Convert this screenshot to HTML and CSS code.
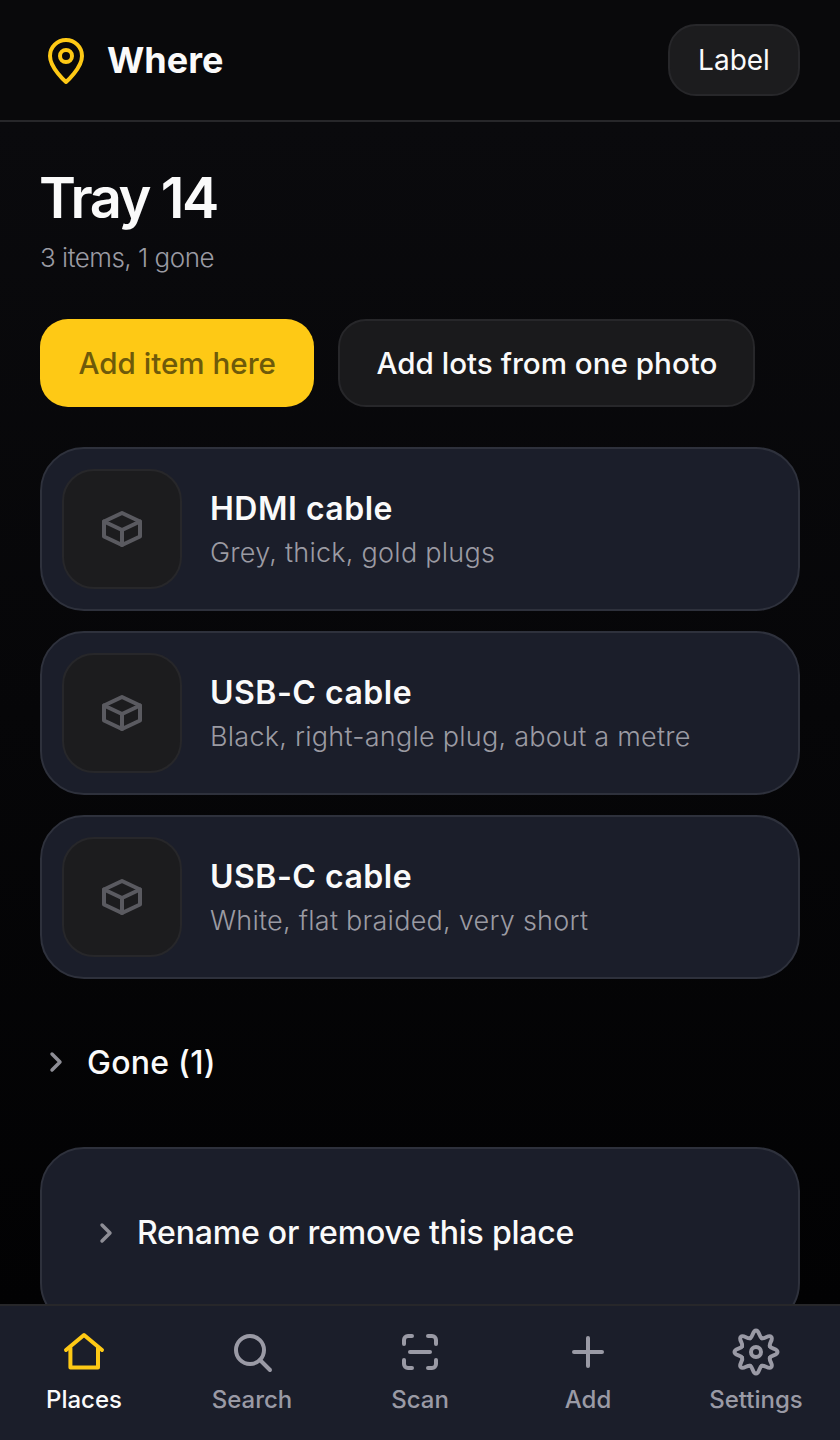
FILE: index.html
```html
<!DOCTYPE html>
<html lang="en">
<head>
    <meta charset="UTF-8">
    <meta name="viewport" content="width=device-width, initial-scale=1.0">
    <title>Where - Tray 14</title>
    <link rel="stylesheet" href="styles.css">
</head>
<body>
    <!-- shared shapes, drawn at each use -->
    <svg class="defs" aria-hidden="true">
        <defs>
            <g id="box" fill="none" stroke="currentColor" stroke-width="4" stroke-linecap="round" stroke-linejoin="round">
                <path d="M22 6 40 14.5V29.5L22 38 4 29.5V14.5Z"/>
                <path d="M4 14.5 22 23 40 14.5"/>
                <path d="M22 23V38"/>
            </g>
            <path id="tooth" d="M18.26 10.14C21 9 20.5 2.5 24 2.5S27 9 29.74 10.14"/>
        </defs>
    </svg>

    <div class="app">
        <header class="topbar">
            <div class="brand">
                <svg class="brand-icon" viewBox="0 0 24 24" fill="none" stroke="currentColor" stroke-width="2" stroke-linecap="round" stroke-linejoin="round">
                    <path d="M20 10c0 6-8 13-8 13s-8-7-8-13a8 8 0 0 1 16 0Z"/>
                    <circle cx="12" cy="10" r="3"/>
                </svg>
                <span class="brand-name">Where</span>
            </div>
            <button class="label-btn">Label</button>
        </header>

        <main class="content">
            <h1 class="title">Tray 14</h1>
            <p class="subtitle">3 items, 1 gone</p>

            <div class="actions">
                <button class="btn btn-primary">Add item here</button>
                <button class="btn btn-ghost">Add lots from one photo</button>
            </div>

            <ul class="items">
                <li class="item">
                    <div class="thumb"><svg viewBox="0 0 44 44"><use href="#box"/></svg></div>
                    <div class="item-text">
                        <div class="item-name">HDMI cable</div>
                        <div class="item-note">Grey, thick, gold plugs</div>
                    </div>
                </li>
                <li class="item">
                    <div class="thumb"><svg viewBox="0 0 44 44"><use href="#box"/></svg></div>
                    <div class="item-text">
                        <div class="item-name">USB-C cable</div>
                        <div class="item-note">Black, right-angle plug, about a metre</div>
                    </div>
                </li>
                <li class="item">
                    <div class="thumb"><svg viewBox="0 0 44 44"><use href="#box"/></svg></div>
                    <div class="item-text">
                        <div class="item-name">USB-C cable</div>
                        <div class="item-note">White, flat braided, very short</div>
                    </div>
                </li>
            </ul>

            <div class="disclosure gone">
                <svg class="chevron" viewBox="0 0 24 24" fill="none" stroke="currentColor" stroke-width="2.6" stroke-linecap="round" stroke-linejoin="round"><path d="m9 18 6-6-6-6"/></svg>
                <span>Gone (1)</span>
            </div>

            <section class="manage">
                <div class="disclosure">
                    <svg class="chevron" viewBox="0 0 24 24" fill="none" stroke="currentColor" stroke-width="2.6" stroke-linecap="round" stroke-linejoin="round"><path d="m9 18 6-6-6-6"/></svg>
                    <span>Rename or remove this place</span>
                </div>
            </section>
        </main>

        <nav class="tabbar">
            <a class="tab active">
                <svg viewBox="0 0 24 24" fill="none" stroke="currentColor" stroke-width="2" stroke-linecap="round" stroke-linejoin="round">
                    <path d="M3 11 12 3.5 21 11"/><path d="M5.2 10v9.7H19V10"/>
                </svg>
                <span>Places</span>
            </a>
            <a class="tab">
                <svg viewBox="0 0 24 24" fill="none" stroke="currentColor" stroke-width="2" stroke-linecap="round" stroke-linejoin="round">
                    <circle cx="11" cy="11" r="7"/><path d="m16 16 5 5"/>
                </svg>
                <span>Search</span>
            </a>
            <a class="tab">
                <svg viewBox="0 0 24 24" fill="none" stroke="currentColor" stroke-width="2" stroke-linecap="round" stroke-linejoin="round">
                    <path d="M8 4H6a2 2 0 0 0-2 2v2"/><path d="M16 4h2a2 2 0 0 1 2 2v2"/><path d="M8 20H6a2 2 0 0 1-2-2v-2"/><path d="M16 20h2a2 2 0 0 0 2-2v-2"/><path d="M7 12h10"/>
                </svg>
                <span>Scan</span>
            </a>
            <a class="tab">
                <svg viewBox="0 0 24 24" fill="none" stroke="currentColor" stroke-width="2" stroke-linecap="round" stroke-linejoin="round">
                    <path d="M5 12h14"/><path d="M12 5v14"/>
                </svg>
                <span>Add</span>
            </a>
            <a class="tab">
                <svg viewBox="0 0 48 48" fill="none" stroke="currentColor" stroke-width="4" stroke-linecap="round" stroke-linejoin="round">
                    <use href="#tooth"/>
                    <use href="#tooth" transform="rotate(45 24 24)"/>
                    <use href="#tooth" transform="rotate(90 24 24)"/>
                    <use href="#tooth" transform="rotate(135 24 24)"/>
                    <use href="#tooth" transform="rotate(180 24 24)"/>
                    <use href="#tooth" transform="rotate(225 24 24)"/>
                    <use href="#tooth" transform="rotate(270 24 24)"/>
                    <use href="#tooth" transform="rotate(315 24 24)"/>
                    <circle cx="24" cy="24" r="5"/>
                </svg>
                <span>Settings</span>
            </a>
        </nav>
    </div>
</body>
</html>
```

FILE: styles.css
```css
* {
    box-sizing: border-box;
}
html, body {
    margin: 0;
    height: 100%;
}
body {
    font-family: Inter, "Noto Sans", sans-serif;
    background-color: #09090b;
    color: #fafafa;
}
button {
    font-family: inherit;
    cursor: pointer;
}
.defs {
    display: none;
}
.app {
    height: 1440px;
    display: flex;
    flex-direction: column;
    overflow: hidden;
}
.topbar {
    flex: none;
    height: 122px;
    padding: 0 40px;
    display: flex;
    align-items: center;
    justify-content: space-between;
    border-bottom: 2px solid #27272a;
}
.brand {
    display: flex;
    align-items: center;
    gap: 17px;
    padding-left: 2px;
}
.brand-icon {
    width: 48px;
    height: 48px;
    color: #fec915;
}
.brand-name {
    font-size: 36px;
    font-weight: 700;
}
.label-btn {
    width: 132px;
    height: 72px;
    padding: 0;
    border-radius: 28px;
    border: 2px solid #27272a;
    background-color: #1c1c1e;
    color: #fafafa;
    font-size: 28px;
    font-weight: 400;
}
.content {
    flex: 1;
    min-height: 0;
    overflow: hidden;
    padding: 40px 40px 0;
    background: linear-gradient(#0a0a0d, #020203);
}
.title {
    margin: 0 0 0 -1px;
    font-size: 56px;
    line-height: 72px;
    font-weight: 600;
    letter-spacing: -2.4px;
}
.subtitle {
    margin: 4px 0 0;
    font-size: 26px;
    line-height: 40px;
    letter-spacing: -0.5px;
    font-weight: 300;
    color: #9b9ba3;
}
.actions {
    display: flex;
    gap: 24px;
    margin-top: 41px;
}
.btn {
    height: 88px;
    padding: 0 36px;
    border-radius: 28px;
    font-size: 29.6px;
    font-weight: 500;
}
.btn-primary {
    padding: 0 38.5px;
    border: none;
    background-color: #fec915;
    color: #6e5a0a;
}
.btn-ghost {
    border: 2px solid #27272a;
    background-color: #1a1a1c;
    color: #fafafa;
}
.items {
    list-style: none;
    margin: 40px 0 0;
    padding: 0;
    display: flex;
    flex-direction: column;
    gap: 20px;
}
.item {
    height: 164px;
    padding: 0 20px;
    display: flex;
    align-items: center;
    gap: 28px;
    background-color: #1b1e2a;
    border: 2px solid #2e313c;
    border-radius: 44px;
}
.thumb {
    flex: none;
    width: 120px;
    height: 120px;
    display: flex;
    align-items: center;
    justify-content: center;
    background-color: #1c1c1e;
    border: 2px solid #27272a;
    border-radius: 32px;
    color: #5a5a60;
}
.thumb svg {
    width: 44px;
    height: 44px;
}
.item-text {
    padding-top: 2px;
}
.item-name {
    font-size: 32px;
    line-height: 44px;
    font-weight: 600;
    letter-spacing: 0.5px;
}
.item-note {
    margin-top: 2px;
    font-size: 27px;
    line-height: 40px;
    font-weight: 300;
    letter-spacing: 0.25px;
    color: #9b9ba3;
}
.disclosure {
    display: flex;
    align-items: center;
    gap: 15px;
    font-size: 32px;
    font-weight: 500;
    letter-spacing: 0.25px;
}
.chevron {
    flex: none;
    width: 32px;
    height: 32px;
    color: #8e8e96;
}
.gone {
    margin-top: 59px;
    height: 48px;
}
.manage {
    margin-top: 61px;
    height: 180px;
    padding: 64px 48px 0;
    background-color: #1b1e2a;
    border: 2px solid #2e313c;
    border-radius: 44px;
}
.manage .disclosure {
    letter-spacing: -0.2px;
}
.tabbar {
    flex: none;
    height: 136px;
    display: grid;
    grid-template-columns: repeat(5, 1fr);
    padding: 22px 0 0;
    background-color: #1b1e2a;
    border-top: 2px solid #27272a;
}
.tab {
    display: flex;
    flex-direction: column;
    align-items: center;
    gap: 9px;
    color: #9a9aa5;
    font-size: 24px;
    font-weight: 500;
}
.tab svg {
    width: 48px;
    height: 48px;
}
.tab.active {
    color: #fafafa;
}
.tab.active svg {
    color: #fec915;
}
```
